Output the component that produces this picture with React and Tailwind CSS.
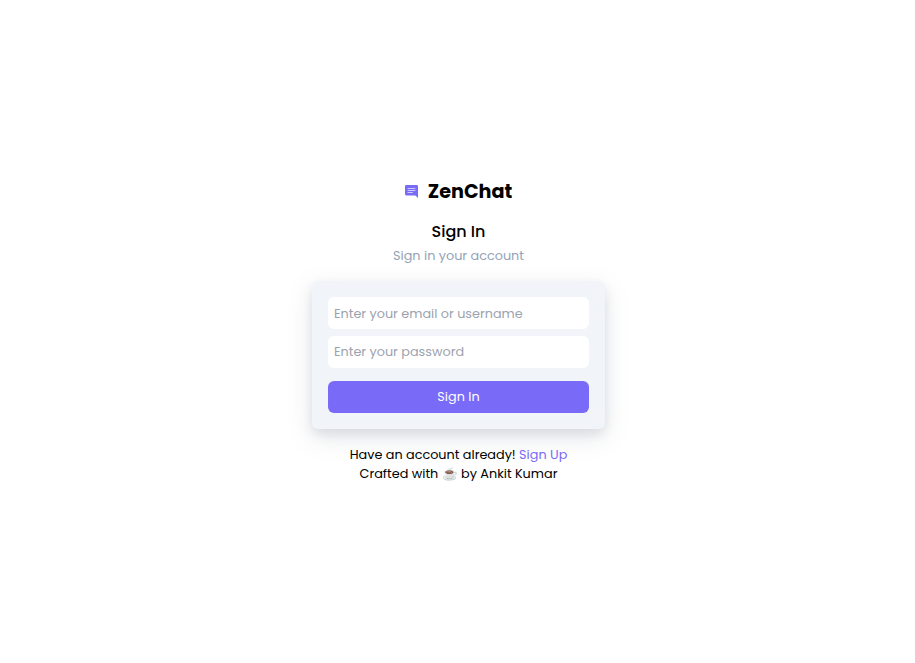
import React from "react";

function LogoIcon() {
  return (
    <svg width="13" height="13" viewBox="0 0 13 13" aria-hidden="true">
      <path d="M1.3 0h10.4A1.3 1.3 0 0 1 13 1.3V13l-2.6-2.6H1.3A1.3 1.3 0 0 1 0 9.100V1.3A1.3 1.3 0 0 1 1.3 0z" fill="#796af7" />
      <path d="M2.6 3.5h7.8M2.6 5.5h7.8M2.6 7.5h5.2" stroke="#cfcafc" strokeWidth="1" />
    </svg>
  );
}

const inputClass =
  "block h-8 w-full rounded-md bg-white px-1.5 text-[12.8px] text-black outline-none placeholder:text-[#9ca3af] placeholder:opacity-100";

export default function App() {
  return (
    <main className="flex h-screen w-full flex-col items-center bg-white pl-[2px] pt-[176px] font-[Poppins,Inter,sans-serif] text-[12.8px] leading-[19.2px] text-black">
      <header className="flex h-[30px] items-center gap-[10px]">
        <LogoIcon />
        <h1 className="whitespace-nowrap pt-px text-[19.2px] font-bold leading-[30px]">ZenChat</h1>
      </header>
      <h2 className="mt-[14px] text-[16px] font-medium leading-6">Sign In</h2>
      <p className="mt-[2px] text-[#94a3b8]">Sign in your account</p>
      <form
        className="mt-[15.8px] h-[148px] w-[293px] rounded-md bg-[#f1f5f9] p-4 shadow-[0_8px_24px_rgba(100,110,130,0.18),0_5px_10px_rgba(100,110,130,0.12)]"
        onSubmit={(e) => e.preventDefault()}
      >
        <input className={inputClass + " pt-px"} type="text" placeholder="Enter your email or username" />
        <input className={inputClass + " mt-[7px]"} type="password" placeholder="Enter your password" />
        <button className="mt-[13px] block h-8 w-full rounded-md bg-[#796af7] text-[12.8px] text-white">Sign In</button>
      </form>
      <footer className="mt-4 flex flex-col items-center whitespace-nowrap">
        <p>
          Have an account already! <a className="text-[#796af7]">Sign Up</a>
        </p>
        <p>Crafted with ☕ by Ankit Kumar</p>
      </footer>
    </main>
  );
}
